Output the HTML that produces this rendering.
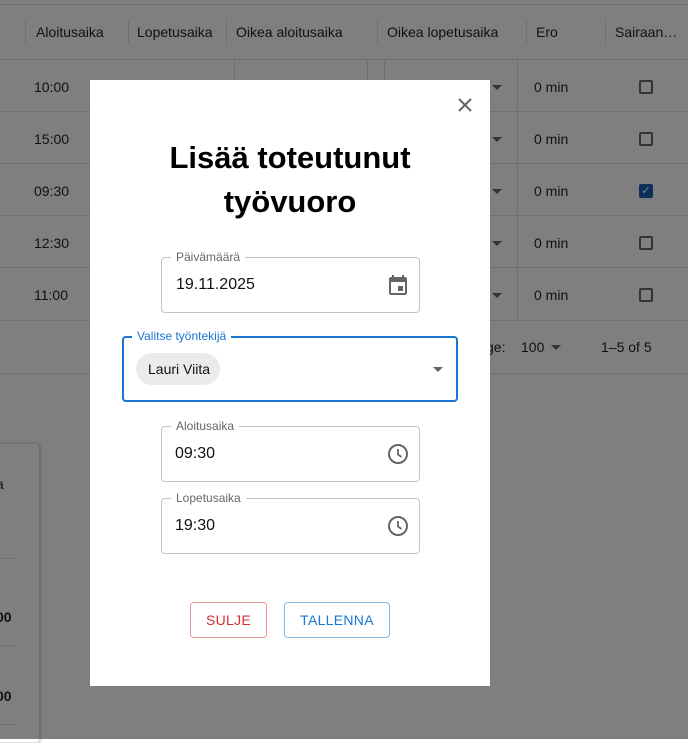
<!DOCTYPE html>
<html><head><meta charset="utf-8"><style>
*{box-sizing:border-box;margin:0;padding:0}
body{width:688px;height:739px;overflow:hidden;position:relative;background:#fff;font-family:"Liberation Sans",Arial,sans-serif;color:#111}
.a{position:absolute}
.bg{position:absolute;inset:0;background:#fff}
.hl{position:absolute;height:1px;background:#e0e0e0}
.vl{position:absolute;width:1px;background:#e0e0e0}
.t{position:absolute;font-size:14px;color:rgba(0,0,0,.87)}
.cb{position:absolute;width:14px;height:14px;border:2px solid #666;border-radius:2px}
.tri{position:absolute;width:0;height:0;border-left:5px solid transparent;border-right:5px solid transparent;border-top:5px solid #666}
.ov{position:absolute;inset:0;background:rgba(0,0,0,.5)}
.fld{position:absolute;border:1px solid #c4c4c4;border-radius:4px}
.lbl{position:absolute;background:#fff;padding:0 5px;font-size:12px;color:#666;top:-8px;left:9px;line-height:14px}
.val{position:absolute;font-size:16px;color:#111}
</style></head><body>
<div class="bg">
<div class="hl" style="left:0;top:4px;width:688px"></div>
<div class="hl" style="left:0;top:59px;width:688px"></div>
<div class="vl" style="left:25px;top:20px;height:24px"></div>
<div class="vl" style="left:128px;top:20px;height:24px"></div>
<div class="vl" style="left:226px;top:20px;height:24px"></div>
<div class="vl" style="left:377px;top:20px;height:24px"></div>
<div class="vl" style="left:526px;top:20px;height:24px"></div>
<div class="vl" style="left:605px;top:20px;height:24px"></div>
<div class="t" style="left:36px;top:24px">Aloitusaika</div>
<div class="t" style="left:137px;top:24px">Lopetusaika</div>
<div class="t" style="left:236px;top:24px">Oikea aloitusaika</div>
<div class="t" style="left:387px;top:24px">Oikea lopetusaika</div>
<div class="t" style="left:536px;top:24px">Ero</div>
<div class="t" style="left:615px;top:24px">Sairaan…</div>
<div class="hl" style="left:0;top:111px;width:688px"></div>
<div class="hl" style="left:0;top:163px;width:688px"></div>
<div class="hl" style="left:0;top:215px;width:688px"></div>
<div class="hl" style="left:0;top:267px;width:688px"></div>
<div class="hl" style="left:0;top:320px;width:688px"></div>
<div class="hl" style="left:0;top:373px;width:688px"></div>
<div class="vl" style="left:234px;top:60px;height:260px"></div>
<div class="vl" style="left:367px;top:60px;height:260px"></div>
<div class="vl" style="left:384px;top:60px;height:260px"></div>
<div class="vl" style="left:517px;top:60px;height:260px"></div>
<div class="t" style="left:34px;top:79px">10:00</div>
<div class="t" style="left:34px;top:131px">15:00</div>
<div class="t" style="left:34px;top:183px">09:30</div>
<div class="t" style="left:34px;top:235px">12:30</div>
<div class="t" style="left:34px;top:287px">11:00</div>
<div class="t" style="left:534px;top:79px">0 min</div>
<div class="t" style="left:534px;top:131px">0 min</div>
<div class="t" style="left:534px;top:183px">0 min</div>
<div class="t" style="left:534px;top:235px">0 min</div>
<div class="t" style="left:534px;top:287px">0 min</div>
<div class="tri" style="left:492px;top:85px"></div>
<div class="tri" style="left:492px;top:137px"></div>
<div class="tri" style="left:492px;top:189px"></div>
<div class="tri" style="left:492px;top:241px"></div>
<div class="tri" style="left:492px;top:293px"></div>
<div class="cb" style="left:639px;top:80px"></div>
<div class="cb" style="left:639px;top:132px"></div>
<div class="a" style="left:639px;top:184px;width:14px;height:14px;background:#1a5fb4;border-radius:2px;color:#fff;font-size:11px;text-align:center;line-height:14px">✓</div>
<div class="cb" style="left:639px;top:236px"></div>
<div class="cb" style="left:639px;top:288px"></div>
<div class="t" style="left:486px;top:339px">ge:</div>
<div class="t" style="left:521px;top:339px">100</div>
<div class="tri" style="left:551px;top:345px"></div>
<div class="t" style="left:601px;top:339px">1–5 of 5</div>
<div class="a" style="left:-10px;top:443px;width:50px;height:300px;border:1px solid #ddd;border-radius:4px;box-shadow:0 1px 3px rgba(0,0,0,.3)"></div>
<div class="t" style="left:-4px;top:476px">a</div>
<div class="hl" style="left:0;top:558px;width:15px"></div>
<div class="t" style="left:-4px;top:609px;font-weight:bold">00</div>
<div class="hl" style="left:0;top:645px;width:15px"></div>
<div class="t" style="left:-4px;top:688px;font-weight:bold">00</div>
<div class="hl" style="left:0;top:724px;width:15px"></div>
</div>
<div class="ov"></div>
<div class="a" style="left:90px;top:80px;width:400px;height:606px;background:#fff">
 <svg class="a" style="left:366px;top:16px" width="18" height="18" viewBox="0 0 18 18"><path d="M3 3L15 15M15 3L3 15" stroke="#666" stroke-width="2"/></svg>
 <div class="a" style="left:0;top:56px;width:400px;text-align:center;font-size:31px;font-weight:bold;line-height:44px;color:#000">Lisää toteutunut<br>työvuoro</div>
 <div class="fld" style="left:71px;top:177px;width:259px;height:56px"><div class="lbl">Päivämäärä</div><div class="val" style="left:14px;top:18px">19.11.2025</div>
  <svg class="a" style="left:224px;top:15px" width="24" height="24" viewBox="0 0 24 24"><path fill="#666" d="M19 4h-1V2h-2v2H8V2H6v2H5c-1.1 0-2 .9-2 2v14c0 1.1.9 2 2 2h14c1.1 0 2-.9 2-2V6c0-1.1-.9-2-2-2zm0 16H5V9h14v11zm-7-7h5v5h-5z"/></svg></div>
 <div class="fld" style="left:32px;top:256px;width:336px;height:66px;border:2px solid #1976d2"><div class="lbl" style="color:#1976d2;top:-9px;left:8px">Valitse työntekijä</div>
  <div class="a" style="left:12px;top:15px;width:84px;height:32px;border-radius:16px;background:#ebebeb;font-size:14px;line-height:32px;padding-left:12px">Lauri Viita</div>
  <div class="tri" style="left:309px;top:29px"></div></div>
 <div class="fld" style="left:71px;top:346px;width:259px;height:56px"><div class="lbl">Aloitusaika</div><div class="val" style="left:13px;top:18px">09:30</div>
  <svg class="a" style="left:224px;top:15px" width="24" height="24" viewBox="0 0 24 24"><circle cx="12" cy="12" r="9" fill="none" stroke="#666" stroke-width="2"/><path d="M12 7v5.5l3.5 2.5" fill="none" stroke="#666" stroke-width="1.8"/></svg></div>
 <div class="fld" style="left:71px;top:418px;width:259px;height:56px"><div class="lbl">Lopetusaika</div><div class="val" style="left:13px;top:18px">19:30</div>
  <svg class="a" style="left:224px;top:15px" width="24" height="24" viewBox="0 0 24 24"><circle cx="12" cy="12" r="9" fill="none" stroke="#666" stroke-width="2"/><path d="M12 7v5.5l3.5 2.5" fill="none" stroke="#666" stroke-width="1.8"/></svg></div>
 <div class="a" style="left:100px;top:522px;width:77px;height:36px;border:1px solid rgba(211,47,47,.5);border-radius:4px;color:#d32f2f;font-size:14px;text-align:center;line-height:34px;letter-spacing:.3px">SULJE</div>
 <div class="a" style="left:194px;top:522px;width:106px;height:36px;border:1px solid rgba(25,118,210,.5);border-radius:4px;color:#1976d2;font-size:14px;text-align:center;line-height:34px;letter-spacing:.3px">TALLENNA</div>
</div>
</body></html>
